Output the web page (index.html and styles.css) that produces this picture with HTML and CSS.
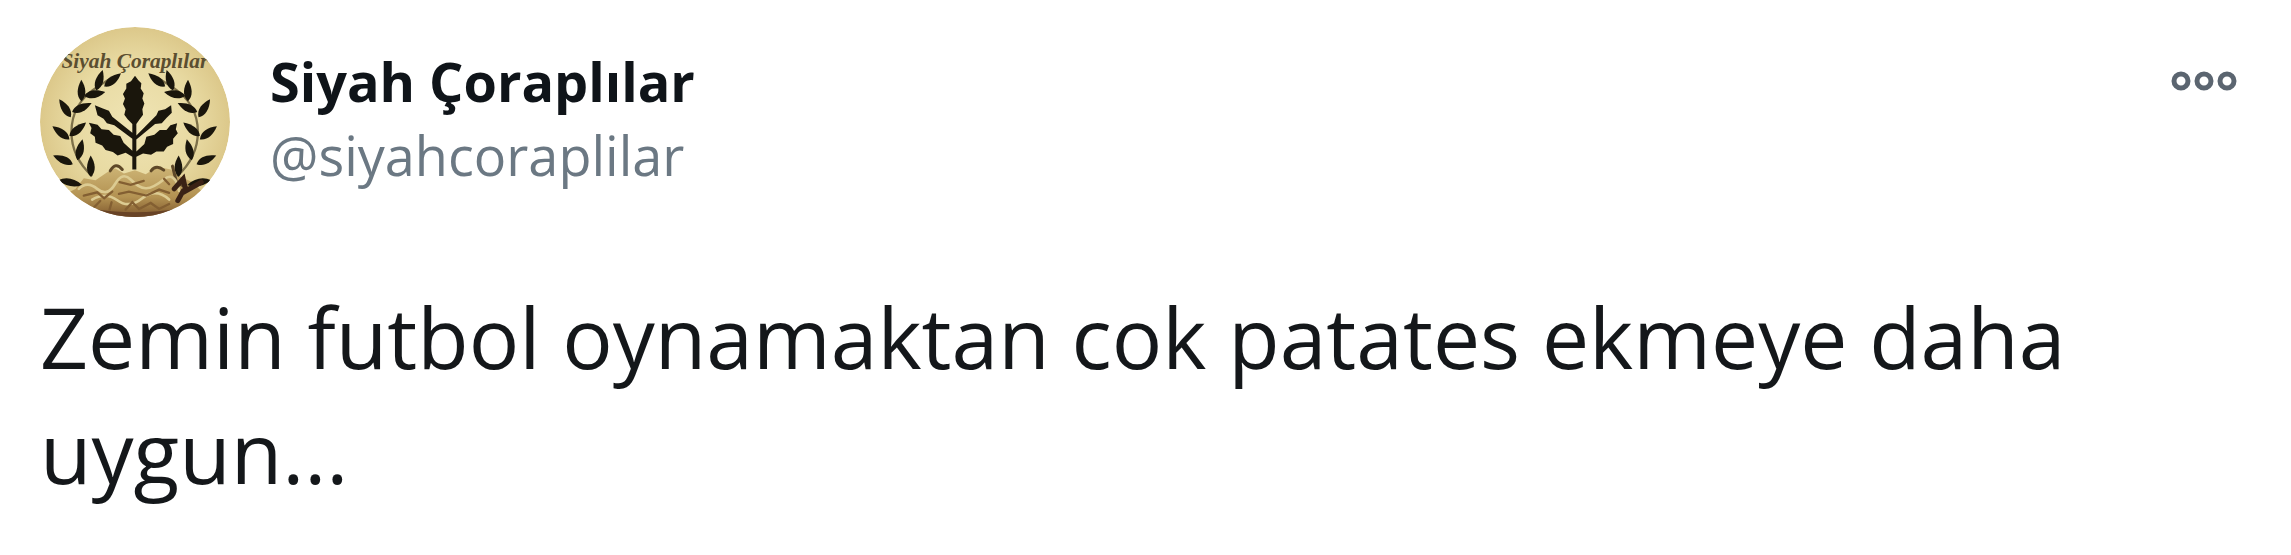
FILE: index.html
```html
<!DOCTYPE html>
<html lang="tr">
<head>
<meta charset="utf-8">
<title>Siyah Çoraplılar</title>
<link rel="stylesheet" href="styles.css">
</head>
<body>
<article class="tweet">
  <header class="tweet-header">
    <svg class="avatar" viewBox="34 36 568 568" role="img" aria-label="Siyah Çoraplılar">
      <defs>
        <clipPath id="round"><circle cx="318" cy="320" r="284"/></clipPath>
        <radialGradient id="paper"><stop offset="0" stop-color="#efe4b4"/><stop offset=".65" stop-color="#e8daa2"/><stop offset="1" stop-color="#dcc88a"/></radialGradient>
        <linearGradient id="soil" x1="0" y1="0" x2="0" y2="1"><stop offset="0" stop-color="#cdb475"/><stop offset=".6" stop-color="#b39252"/><stop offset="1" stop-color="#80592e"/></linearGradient>
        <path id="leaf" d="M0 0C-17 -14 -17 -38 -5 -64C11 -42 16 -18 0 0Z"/>
        <g id="branch">
          <path d="M190 482Q128 425 128 350Q128 265 205 215L245 190" fill="none" stroke="#7d7049" stroke-width="7"/>
          <use href="#leaf" transform="translate(226 214) rotate(56)"/>
          <use href="#leaf" transform="translate(202 226) rotate(22)"/>
          <use href="#leaf" transform="translate(166 242) rotate(84)"/>
          <use href="#leaf" transform="translate(158 258) rotate(4)"/>
          <use href="#leaf" transform="translate(130 290) rotate(70)"/>
          <use href="#leaf" transform="translate(126 306) rotate(-28)"/>
          <use href="#leaf" transform="translate(122 362) rotate(55)"/>
          <use href="#leaf" transform="translate(122 372) rotate(-48)"/>
          <use href="#leaf" transform="translate(146 434) rotate(18)"/>
          <use href="#leaf" transform="translate(132 446) rotate(-62)"/>
          <use href="#leaf" transform="translate(186 484) rotate(4)"/>
          <path d="M88 494Q125 478 160 508Q125 522 88 494Z"/>
        </g>
      </defs>
      <g clip-path="url(#round)">
        <circle cx="318" cy="320" r="284" fill="url(#paper)"/>
        <text class="avatar-text" x="98" y="158">Siyah Çoraplılar</text>
        <path d="M140 520L165 488L200 494L235 470L258 458L285 474L318 464L350 476L385 454L425 462L455 484L490 500L520 530V604H120V530Z" fill="url(#soil)"/>
        <g fill="#1a160c">
          <use href="#branch"/>
          <use href="#branch" transform="translate(634 0) scale(-1 1)"/>
          <path d="M318 182L328 195L337 204L335 220L344 234L340 250L346 265L340 282L342 298L332 312L322 326L322 360L382 300L388 286L408 282L426 270L428 292L412 308L398 324L378 326L322 372V408L346 386L352 364L376 358L392 344L412 344L424 330L444 324L440 342L446 354L432 370L432 386L414 394L404 408L382 408L366 418L342 414L322 424V462H310V424L290 412L266 420L252 410L230 404L220 390L200 382L198 364L184 354L188 338L180 322L206 328L218 342L240 344L254 358L274 362L284 382L310 406V370L256 330L234 324L224 310L206 300L198 270L222 280L240 286L250 304L310 352V326L296 312L286 298L290 282L282 266L288 250L282 236L292 220L292 206L306 198Z"/>
        </g>
        <g fill="none" stroke-linecap="round">
          <path d="M244 466Q260 438 280 462M366 466Q382 446 404 464M430 452L442 500L480 520" stroke="#5e4828" stroke-width="9"/>
          <path d="M150 520Q175 495 205 520T258 506T305 492T350 518T404 492T450 526M190 552Q230 528 265 554T340 548T420 552" stroke="#dccb92" stroke-width="8"/>
          <path d="M165 540L205 530L226 548L250 528M272 500L305 508L344 496M270 535L300 528L352 540L390 522L420 532M405 490L420 506M196 575L214 556M242 582L248 560M290 582L310 560L330 580L365 562L390 580L420 565" stroke="#835f32" stroke-width="7"/>
          <path d="M435 520L462 490L470 526L516 500M446 555L462 526" stroke="#3a2215" stroke-width="15"/>
        </g>
        <path d="M180 578Q318 602 456 578V604H180Z" fill="#684326"/>
      </g>
    </svg>
    <div class="author">
      <a class="name" href="#profile">Siyah Çoraplılar</a>
      <a class="handle" href="#profile">@siyahcoraplilar</a>
    </div>
    <button class="more" type="button" aria-label="Daha fazla">
      <svg viewBox="0 0 66 20" aria-hidden="true"><g fill="none" stroke="#5b6570" stroke-width="5"><circle cx="10" cy="10" r="7"/><circle cx="33" cy="10" r="7"/><circle cx="56" cy="10" r="7"/></g></svg>
    </button>
  </header>
  <p class="tweet-text">Zemin futbol oynamaktan cok patates ekmeye daha uygun...</p>
</article>
</body>
</html>
```
FILE: styles.css
```css
body {
  margin: 0;
  background: #fff;
  color: #14171a;
  font-family: "Open Sans", "Noto Sans", sans-serif;
}
.tweet {
  padding: 27px 40px 40px;
}
.tweet-header {
  display: flex;
  align-items: flex-start;
}
.avatar {
  width: 190px;
  height: 190px;
  flex: none;
}
.avatar-text {
  font: italic bold 64px "Liberation Serif", serif;
  fill: #5b4e30;
}
.author {
  display: flex;
  flex: 1;
  flex-direction: column;
  padding: 17px 0 0 40px;
}
.author a {
  align-self: flex-start;
  font-size: 54px;
  line-height: 74px;
  text-decoration: none;
}
.author .name {
  color: #0f1419;
  font-weight: 700;
}
.author .handle {
  color: #6b7883;
}
.more {
  margin: 44px 14px 0 0;
  padding: 0;
  border: 0;
  background: none;
}
.more svg {
  display: block;
  width: 66px;
  height: 20px;
}
.tweet-text {
  margin: 62px 0 0;
  font-size: 84px;
  line-height: 115px;
}
```
